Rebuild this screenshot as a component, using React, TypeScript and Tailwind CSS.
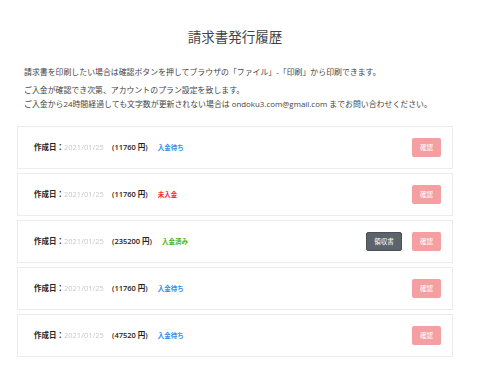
const rows = [
  { amount: "11760", status: "入金待ち", color: "text-[#3a8ee6]", receipt: false },
  { amount: "11760", status: "未入金", color: "text-[#ff2a2a]", receipt: false },
  { amount: "235200", status: "入金済み", color: "text-[#52b520]", receipt: true },
  { amount: "11760", status: "入金待ち", color: "text-[#3a8ee6]", receipt: false },
  { amount: "47520", status: "入金待ち", color: "text-[#3a8ee6]", receipt: false },
];

function App() {
  return (
    <div
      className="w-[500px] h-[386px] bg-white text-[#333] overflow-hidden"
      style={{ fontFamily: '"Open Sans", "Noto Sans CJK JP", sans-serif' }}
    >
      <div className="w-[436px] ml-[17px]">
        <h1 className="pt-[27px] text-center text-[13.5px] leading-[20px] text-[#444]">
          請求書発行履歴
        </h1>
        <div className="mt-[20px] px-[7px] text-[7.9px] text-[#444]">
          <p className="leading-[11px]">
            請求書を印刷したい場合は確認ボタンを押してブラウザの「ファイル」-「印刷」から印刷できます。
          </p>
          <p className="mt-[5px] leading-[14px]">
            ご入金が確認でき次第、アカウントのプラン設定を致します。
            <br />
            ご入金から24時間経過しても文字数が更新されない場合は ondoku3.com@gmail.com までお問い合わせください。
          </p>
        </div>
        <div className="mt-[15px] flex flex-col gap-[4px]">
          {rows.map((row, i) => (
            <div
              key={i}
              className="h-[43px] border border-[#ececec] flex items-center pl-[16px] pr-[11px]"
            >
              <span className="text-[7.5px] font-bold text-[#222]">作成日：</span>
              <span className="text-[7.5px] text-[#c8c8c8] blur-[0.7px] w-[48px]">2021/01/25</span>
              <span className="text-[7.5px] font-semibold text-[#222]">({row.amount} 円)</span>
              <span className={`ml-[10px] text-[6.5px] font-bold ${row.color}`}>{row.status}</span>
              <div className="ml-auto flex items-center gap-[10px]">
                {row.receipt && (
                  <button className="h-[19px] w-[36px] rounded-[2px] bg-[#5c636a] border border-[#4a5057] text-white text-[6.5px]">
                    領収書
                  </button>
                )}
                <button className="h-[19px] w-[29px] rounded-[2px] bg-[#f4a0a3] text-white text-[6.5px]">
                  確認
                </button>
              </div>
            </div>
          ))}
        </div>
      </div>
    </div>
  );
}

export default App;
